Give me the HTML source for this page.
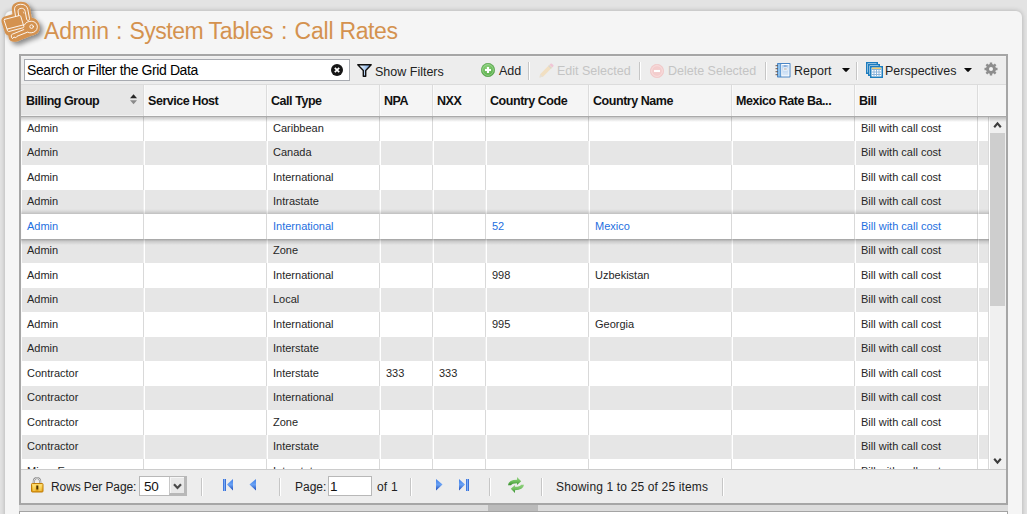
<!DOCTYPE html>
<html><head><meta charset="utf-8">
<style>
*{margin:0;padding:0;box-sizing:border-box}
html,body{width:1027px;height:514px;overflow:hidden;background:#e3e3e3;font-family:"Liberation Sans",sans-serif}
#panel{position:absolute;left:5px;top:11px;width:1017px;height:600px;background:#f5f5f5;border-radius:6px;box-shadow:0 0 5px rgba(0,0,0,0.24)}
#title{position:absolute;left:0;top:17px;width:420px;height:28px;font-size:23px;color:#d4924f;white-space:nowrap;line-height:28px}
#logo{position:absolute;left:0;top:0;width:60px;height:60px}
#grid{position:absolute;left:19px;top:54px;width:989px;height:451px;border:2px solid #a6a6a6;background:#fff;overflow:hidden}
#tb{position:absolute;left:0;top:0;width:985px;height:28px;background:#ededed;border-top:1px solid #f2f2f2}
#search{position:absolute;left:3px;top:2px;width:326px;height:22px;background:#fff;border:1px solid #a8abb1;font-size:14px;letter-spacing:-0.4px;line-height:20px;padding-left:2px;color:#000}
.tbt{position:absolute;top:7px;font-size:12.5px;line-height:16px;color:#222;white-space:nowrap}
.dis{color:#c4c4c4}
.sep{position:absolute;top:5px;width:2px;height:18px;border-left:1px solid #c6c6c6;background:#fff}
#hd{position:absolute;left:0;top:28px;width:985px;height:33px;background:#f5f5f5;border-top:1px solid #dcdcdc;border-bottom:1px solid #aaaaaa;z-index:5}
#hsh{position:absolute;left:0;top:61px;width:985px;height:5px;background:linear-gradient(rgba(0,0,0,0.22),rgba(0,0,0,0));z-index:6}
.h{position:absolute;top:0;height:31px;border-left:1px solid #dcdcdc;box-shadow:inset 1px 0 #fafafa,inset 0 -1px #fafafa;font-weight:bold;font-size:12.5px;letter-spacing:-0.45px;color:#111;line-height:33px;padding-left:4px;white-space:nowrap}
.h.sorted{background:#e6e6e6;border-left:none;box-shadow:inset 0 -1px #f2f2f2;padding-left:5px}
#body{position:absolute;left:0;top:61px;width:985px;height:352px;overflow:hidden;background:#fff}
.row{position:absolute;left:0;width:968px;background:#fff;box-shadow:inset 1px 0 #fcfcfc}
.row.alt{background:#e6e6e6}
.row.sel{background:#fff;z-index:2}
.row.sel:before{content:"";position:absolute;left:0;right:0;top:-5px;height:5px;background:linear-gradient(rgba(0,0,0,0),rgba(0,0,0,0.05) 40%,rgba(0,0,0,0.17))}
.row.sel:after{content:"";position:absolute;left:0;right:0;bottom:-6px;height:6px;background:linear-gradient(rgba(0,0,0,0.3),rgba(0,0,0,0.12) 40%,rgba(0,0,0,0))}
.row.sel .c{color:#1e6fe0}
.c{position:absolute;top:0;height:100%;font-size:11px;line-height:22px;padding-left:6px;color:#262626;white-space:nowrap;overflow:hidden;border-left:1px solid #d9d9d9;box-shadow:inset 1px 0 #fff}
.alt .c{border-left-color:#eeeeee}
.c.c0{border-left:none;box-shadow:none;padding-left:6px}
.c.fill{border-right:1px solid #d9d9d9}
.alt .c.fill{border-left-color:#d9d9d9}
.vl{position:absolute;top:0;width:1px;height:352px;background:#dadada;z-index:3}
#vs{position:absolute;left:969px;top:0;width:16px;height:352px;background:#f0f0f0;z-index:4}
#thumb{position:absolute;left:0;top:16px;width:15px;height:173px;background:#cecece}
#ft{position:absolute;left:0;top:413px;width:985px;height:34px;background:#ededed;border-top:1px solid #cccccc}
.ftt{position:absolute;top:10px;font-size:12px;line-height:14px;color:#222;white-space:nowrap}
.fsep{position:absolute;top:8px;width:2px;height:18px;border-left:1px solid #c6c6c6;background:#fff}
#hs{position:absolute;left:19px;top:505px;width:989px;height:6px;background:#dcdcdc}
#hthumb{position:absolute;left:469px;top:0;width:50px;height:6px;background:#bbbbbb}
#below{position:absolute;left:19px;top:511px;width:989px;height:10px;background:#fff;border:1px solid #a4a4a4}
</style></head><body>
<div id="panel"></div>
<svg id="logo" viewBox="0 0 60 60">
 <defs><filter id="sh" x="-30%" y="-30%" width="160%" height="160%"><feGaussianBlur in="SourceAlpha" stdDeviation="2.8"/><feOffset dx="2.5" dy="3"/><feComponentTransfer><feFuncA type="linear" slope="0.45"/></feComponentTransfer><feMerge><feMergeNode/><feMergeNode in="SourceGraphic"/></feMerge></filter></defs>
 <g filter="url(#sh)">
  <path d="M11.8 9 C11.8 5 14.5 2.2 20.3 1.8 C25.8 1.5 29.3 4.3 30.3 8.8 L31.6 17.8 C35.5 18 39.5 21.5 39.8 26.8 C40 31.5 37 35 32 35.6 L20 40.2 C17.5 41.5 15.5 42 13.8 41.8 C11.2 41.6 9.4 40.6 8.8 38.6 L8.3 35.5 C6.8 35.3 5.6 34.3 5 32.8 L1.7 22.5 C1 20 1.8 17.6 4 16.8 L12.4 14.3 Z" fill="#d4924f"/>
 </g>
 <g fill="none" stroke="#fff" stroke-width="0.9" stroke-linejoin="round" stroke-linecap="round">
  <path d="M4.8 19.3 L19.2 15.6 C20 15.4 20.6 15.8 20.8 16.5 L23.8 26.3 C24 27 23.6 27.6 22.9 27.8 L9 31.5 C8.3 31.7 7.7 31.3 7.5 30.6 L4.2 20.6 C4 19.9 4.2 19.5 4.8 19.3 Z"/>
  <path d="M7.4 29 L23 25"/>
  <path d="M15.5 16.2 L14.6 10 C14.2 6.5 16.5 4.5 20.5 4.3 C24.5 4.1 27 6 27.8 9.5 L29.5 18.5 C29.7 19.6 29.1 20.3 28.2 20.4 C27.4 20.5 26.8 20 26.6 19.1 L25.2 11.5 C24.8 9.2 23.3 8.2 21.2 8.3 C19 8.4 17.8 9.8 18.1 12 L18.7 15.4"/>
  <path d="M24.4 25 C25.5 22.5 28 21.2 31.5 21.3 C35.2 21.5 37.5 24 37.3 27.3 C37.1 30.6 34.5 32.6 31.2 32.8 C29.8 32.9 28.6 32.6 27.6 32.1 L17 36.3 L15.8 37.8 L14 37 L13 38.3 C12.2 38.6 11.6 38.2 11.5 37.4 L11.3 35.8 C11.2 35 11.6 34.5 12.4 34.2 L23.8 29.6"/>
  <circle cx="31.6" cy="26.6" r="1.8"/>
  <path d="M23.4 12 L23.9 13.2" stroke-width="0.6"/>
 </g>
</svg>
<div id="title"><span style="position:absolute;left:44px;letter-spacing:-0.05px">Admin</span><span style="position:absolute;left:116px;letter-spacing:0px">:</span><span style="position:absolute;left:129.5px;letter-spacing:-0.5px">System</span><span style="position:absolute;left:208.5px;letter-spacing:-0.3px">Tables</span><span style="position:absolute;left:281px;letter-spacing:0px">:</span><span style="position:absolute;left:294.5px;letter-spacing:-0.2px">Call</span><span style="position:absolute;left:339.5px;letter-spacing:-0.4px">Rates</span></div>
<div id="grid">
 <div id="tb">
  <div id="search">Search or Filter the Grid Data
   <svg style="position:absolute;left:306px;top:4px" width="12" height="12" viewBox="0 0 12 12"><circle cx="6" cy="6" r="6" fill="#161616"/><path d="M3.8 3.8 L8.2 8.2 M8.2 3.8 L3.8 8.2" stroke="#fff" stroke-width="1.7"/></svg>
  </div>
  <svg style="position:absolute;left:336px;top:7px" width="15" height="13" viewBox="0 0 15 13"><defs><linearGradient id="fn" x1="0" y1="0" x2="1" y2="0"><stop offset="0" stop-color="#ffffff"/><stop offset="0.6" stop-color="#a8c8ee"/><stop offset="1" stop-color="#5a8ad0"/></linearGradient></defs><path d="M0.8 0.8 H14.2 L8.7 6.6 V12.2 H6.3 V6.6 Z" fill="url(#fn)" stroke="#111" stroke-width="1.4" stroke-linejoin="round"/></svg>
  <div class="tbt" style="left:354px">Show Filters</div>
  <svg style="position:absolute;left:460px;top:6px" width="14" height="14" viewBox="0 0 14 14"><defs><radialGradient id="gg" cx="45%" cy="35%" r="70%"><stop offset="0" stop-color="#8fd47e"/><stop offset="1" stop-color="#4aa33c"/></radialGradient></defs><circle cx="7" cy="7" r="6.7" fill="url(#gg)" stroke="#4f9c45" stroke-width="0.6"/><circle cx="7" cy="7" r="5.4" fill="none" stroke="#c8ecc0" stroke-opacity="0.7" stroke-width="0.7"/><path d="M7 4 V10 M4 7 H10" stroke="#fff" stroke-width="2.1"/></svg>
  <div class="tbt" style="left:478px;top:6px">Add</div>
  <div class="sep" style="left:507px"></div>
  <svg style="position:absolute;left:517px;top:6px" width="16" height="16" viewBox="0 0 16 16"><path d="M1.5 14.5 L2.3 11 L11.5 1.8 L14.2 4.5 L5 13.7 Z" fill="#f1dfc2"/><path d="M11.5 1.8 L12.6 0.7 C13 0.3 13.5 0.3 13.9 0.7 L15.3 2.1 C15.7 2.5 15.7 3 15.3 3.4 L14.2 4.5 Z" fill="#f0c6d6"/><path d="M10.6 2.7 L13.3 5.4" stroke="#d6d6d6" stroke-width="1.2"/><path d="M1.5 14.5 L2.3 11 L5 13.7 Z" fill="#e6e0d6"/></svg>
  <div class="tbt dis" style="left:536px;top:6px">Edit Selected</div>
  <div class="sep" style="left:618px"></div>
  <svg style="position:absolute;left:629px;top:7px" width="14" height="14" viewBox="0 0 14 14"><circle cx="7" cy="7" r="6.7" fill="#f3cdcd" stroke="#efc3c3" stroke-width="0.6"/><circle cx="7" cy="7" r="5.4" fill="none" stroke="#f9e2e2" stroke-width="0.7"/><path d="M4 7 H10" stroke="#fff" stroke-width="2.1"/></svg>
  <div class="tbt dis" style="left:647px;top:6px">Delete Selected</div>
  <div class="sep" style="left:744px"></div>
  <svg style="position:absolute;left:754px;top:5px" width="16" height="16" viewBox="0 0 16 16"><defs><linearGradient id="rp" x1="0" y1="0" x2="0" y2="1"><stop offset="0" stop-color="#a9c8ec"/><stop offset="1" stop-color="#dbe9f8"/></linearGradient></defs><rect x="2" y="1" width="13.5" height="14.5" rx="0.8" fill="#4a86c6"/><rect x="3" y="2" width="2.4" height="12.5" fill="#8cc0ec"/><rect x="6.2" y="2" width="8.3" height="12.5" fill="#fff"/><rect x="7.2" y="3" width="6.3" height="10.5" fill="url(#rp)"/><rect x="8.2" y="5.5" width="4.3" height="3" fill="#fff"/><path d="M8.8 7 H11.8" stroke="#777" stroke-width="0.7"/><path d="M9 4 H11.5" stroke="#3a6fb0" stroke-width="0.6"/><path d="M0.5 3.7 H3 M0.5 6.7 H3 M0.5 9.7 H3 M0.5 12.7 H3" stroke="#6a5a50" stroke-width="1"/></svg>
  <div class="tbt" style="left:773px;top:6px">Report</div>
  <svg style="position:absolute;left:821px;top:11px" width="8" height="4" viewBox="0 0 8 4"><path d="M0 0 H8 L4.6 3.8 H3.4 Z" fill="#0a0a0a"/></svg>
  <div class="sep" style="left:835px"></div>
  <svg style="position:absolute;left:845px;top:5px" width="17" height="16" viewBox="0 0 17 16"><rect x="0.75" y="0.75" width="10.5" height="10.5" fill="#fff" stroke="#1c7cbe" stroke-width="1.5"/><rect x="2.75" y="2.75" width="10.5" height="10.5" fill="#fff" stroke="#1c7cbe" stroke-width="1.5"/><rect x="4.75" y="4.75" width="11.5" height="10.5" fill="#fff" stroke="#1c7cbe" stroke-width="1.5"/><path d="M6 7.5 H15 M6 10 H15 M6 12.5 H15 M8 7 V14 M10.5 7 V14 M13 7 V14" stroke="#8ab4dc" stroke-width="1"/><path d="M6 6.2 H15" stroke="#f0b830" stroke-width="1"/></svg>
  <div class="tbt" style="left:864px;top:6px">Perspectives</div>
  <svg style="position:absolute;left:943px;top:11px" width="8" height="4" viewBox="0 0 8 4"><path d="M0 0 H8 L4.6 3.8 H3.4 Z" fill="#0a0a0a"/></svg>
  <svg style="position:absolute;left:963px;top:5px" width="14" height="14" viewBox="0 0 14 14"><g fill="#8e8e8e"><circle cx="7" cy="7" r="5"/><rect x="5.8" y="0.5" width="2.4" height="13"/><rect x="0.5" y="5.8" width="13" height="2.4"/><rect x="5.8" y="0.5" width="2.4" height="13" transform="rotate(45 7 7)"/><rect x="5.8" y="0.5" width="2.4" height="13" transform="rotate(-45 7 7)"/></g><circle cx="7" cy="7" r="2" fill="#f4f4f4"/></svg>
 </div>
 <div id="hd">
<div class="h sorted" style="left:0px;width:122px"><span>Billing Group</span></div>
<div class="h" style="left:122px;width:123px"><span>Service Host</span></div>
<div class="h" style="left:245px;width:113px"><span>Call Type</span></div>
<div class="h" style="left:358px;width:53px"><span>NPA</span></div>
<div class="h" style="left:411px;width:53px"><span>NXX</span></div>
<div class="h" style="left:464px;width:103px"><span>Country Code</span></div>
<div class="h" style="left:567px;width:143px"><span>Country Name</span></div>
<div class="h" style="left:710px;width:123px"><span>Mexico Rate Ba...</span></div>
<div class="h" style="left:833px;width:123px"><span>Bill</span></div>
<div class="h" style="left:956px;width:29px"></div>
  <svg style="position:absolute;left:109px;top:9px" width="7" height="11" viewBox="0 0 7 11"><path d="M0 4.2 L3.5 0.2 L7 4.2 Z" fill="#262626"/><path d="M0 6.3 L3.5 10.3 L7 6.3 Z" fill="#8a8a8a"/></svg>
 </div>
 <div id="hsh"></div>
 <div id="body">
<div class="row" style="top:0px;height:24px"><div class="c c0" style="left:0px;width:122px;padding-top:0px">Admin</div><div class="c" style="left:122px;width:123px;padding-top:0px"></div><div class="c" style="left:245px;width:113px;padding-top:0px">Caribbean</div><div class="c" style="left:358px;width:53px;padding-top:0px"></div><div class="c" style="left:411px;width:53px;padding-top:0px"></div><div class="c" style="left:464px;width:103px;padding-top:0px"></div><div class="c" style="left:567px;width:143px;padding-top:0px"></div><div class="c" style="left:710px;width:123px;padding-top:0px"></div><div class="c" style="left:833px;width:123px;padding-top:0px">Bill with call cost</div><div class="c fill" style="left:956px;width:12px"></div></div>
<div class="row alt" style="top:24px;height:24px"><div class="c c0" style="left:0px;width:122px;padding-top:0px">Admin</div><div class="c" style="left:122px;width:123px;padding-top:0px"></div><div class="c" style="left:245px;width:113px;padding-top:0px">Canada</div><div class="c" style="left:358px;width:53px;padding-top:0px"></div><div class="c" style="left:411px;width:53px;padding-top:0px"></div><div class="c" style="left:464px;width:103px;padding-top:0px"></div><div class="c" style="left:567px;width:143px;padding-top:0px"></div><div class="c" style="left:710px;width:123px;padding-top:0px"></div><div class="c" style="left:833px;width:123px;padding-top:0px">Bill with call cost</div><div class="c fill" style="left:956px;width:12px"></div></div>
<div class="row" style="top:48px;height:25px"><div class="c c0" style="left:0px;width:122px;padding-top:1px">Admin</div><div class="c" style="left:122px;width:123px;padding-top:1px"></div><div class="c" style="left:245px;width:113px;padding-top:1px">International</div><div class="c" style="left:358px;width:53px;padding-top:1px"></div><div class="c" style="left:411px;width:53px;padding-top:1px"></div><div class="c" style="left:464px;width:103px;padding-top:1px"></div><div class="c" style="left:567px;width:143px;padding-top:1px"></div><div class="c" style="left:710px;width:123px;padding-top:1px"></div><div class="c" style="left:833px;width:123px;padding-top:1px">Bill with call cost</div><div class="c fill" style="left:956px;width:12px"></div></div>
<div class="row alt" style="top:73px;height:24px"><div class="c c0" style="left:0px;width:122px;padding-top:0px">Admin</div><div class="c" style="left:122px;width:123px;padding-top:0px"></div><div class="c" style="left:245px;width:113px;padding-top:0px">Intrastate</div><div class="c" style="left:358px;width:53px;padding-top:0px"></div><div class="c" style="left:411px;width:53px;padding-top:0px"></div><div class="c" style="left:464px;width:103px;padding-top:0px"></div><div class="c" style="left:567px;width:143px;padding-top:0px"></div><div class="c" style="left:710px;width:123px;padding-top:0px"></div><div class="c" style="left:833px;width:123px;padding-top:0px">Bill with call cost</div><div class="c fill" style="left:956px;width:12px"></div></div>
<div class="row sel" style="top:97px;height:25px"><div class="c c0" style="left:0px;width:122px;padding-top:1px">Admin</div><div class="c" style="left:122px;width:123px;padding-top:1px"></div><div class="c" style="left:245px;width:113px;padding-top:1px">International</div><div class="c" style="left:358px;width:53px;padding-top:1px"></div><div class="c" style="left:411px;width:53px;padding-top:1px"></div><div class="c" style="left:464px;width:103px;padding-top:1px">52</div><div class="c" style="left:567px;width:143px;padding-top:1px">Mexico</div><div class="c" style="left:710px;width:123px;padding-top:1px"></div><div class="c" style="left:833px;width:123px;padding-top:1px">Bill with call cost</div><div class="c fill" style="left:956px;width:12px"></div></div>
<div class="row alt" style="top:122px;height:24px"><div class="c c0" style="left:0px;width:122px;padding-top:0px">Admin</div><div class="c" style="left:122px;width:123px;padding-top:0px"></div><div class="c" style="left:245px;width:113px;padding-top:0px">Zone</div><div class="c" style="left:358px;width:53px;padding-top:0px"></div><div class="c" style="left:411px;width:53px;padding-top:0px"></div><div class="c" style="left:464px;width:103px;padding-top:0px"></div><div class="c" style="left:567px;width:143px;padding-top:0px"></div><div class="c" style="left:710px;width:123px;padding-top:0px"></div><div class="c" style="left:833px;width:123px;padding-top:0px">Bill with call cost</div><div class="c fill" style="left:956px;width:12px"></div></div>
<div class="row" style="top:146px;height:25px"><div class="c c0" style="left:0px;width:122px;padding-top:1px">Admin</div><div class="c" style="left:122px;width:123px;padding-top:1px"></div><div class="c" style="left:245px;width:113px;padding-top:1px">International</div><div class="c" style="left:358px;width:53px;padding-top:1px"></div><div class="c" style="left:411px;width:53px;padding-top:1px"></div><div class="c" style="left:464px;width:103px;padding-top:1px">998</div><div class="c" style="left:567px;width:143px;padding-top:1px">Uzbekistan</div><div class="c" style="left:710px;width:123px;padding-top:1px"></div><div class="c" style="left:833px;width:123px;padding-top:1px">Bill with call cost</div><div class="c fill" style="left:956px;width:12px"></div></div>
<div class="row alt" style="top:171px;height:24px"><div class="c c0" style="left:0px;width:122px;padding-top:0px">Admin</div><div class="c" style="left:122px;width:123px;padding-top:0px"></div><div class="c" style="left:245px;width:113px;padding-top:0px">Local</div><div class="c" style="left:358px;width:53px;padding-top:0px"></div><div class="c" style="left:411px;width:53px;padding-top:0px"></div><div class="c" style="left:464px;width:103px;padding-top:0px"></div><div class="c" style="left:567px;width:143px;padding-top:0px"></div><div class="c" style="left:710px;width:123px;padding-top:0px"></div><div class="c" style="left:833px;width:123px;padding-top:0px">Bill with call cost</div><div class="c fill" style="left:956px;width:12px"></div></div>
<div class="row" style="top:195px;height:25px"><div class="c c0" style="left:0px;width:122px;padding-top:1px">Admin</div><div class="c" style="left:122px;width:123px;padding-top:1px"></div><div class="c" style="left:245px;width:113px;padding-top:1px">International</div><div class="c" style="left:358px;width:53px;padding-top:1px"></div><div class="c" style="left:411px;width:53px;padding-top:1px"></div><div class="c" style="left:464px;width:103px;padding-top:1px">995</div><div class="c" style="left:567px;width:143px;padding-top:1px">Georgia</div><div class="c" style="left:710px;width:123px;padding-top:1px"></div><div class="c" style="left:833px;width:123px;padding-top:1px">Bill with call cost</div><div class="c fill" style="left:956px;width:12px"></div></div>
<div class="row alt" style="top:220px;height:24px"><div class="c c0" style="left:0px;width:122px;padding-top:0px">Admin</div><div class="c" style="left:122px;width:123px;padding-top:0px"></div><div class="c" style="left:245px;width:113px;padding-top:0px">Interstate</div><div class="c" style="left:358px;width:53px;padding-top:0px"></div><div class="c" style="left:411px;width:53px;padding-top:0px"></div><div class="c" style="left:464px;width:103px;padding-top:0px"></div><div class="c" style="left:567px;width:143px;padding-top:0px"></div><div class="c" style="left:710px;width:123px;padding-top:0px"></div><div class="c" style="left:833px;width:123px;padding-top:0px">Bill with call cost</div><div class="c fill" style="left:956px;width:12px"></div></div>
<div class="row" style="top:244px;height:25px"><div class="c c0" style="left:0px;width:122px;padding-top:1px">Contractor</div><div class="c" style="left:122px;width:123px;padding-top:1px"></div><div class="c" style="left:245px;width:113px;padding-top:1px">Interstate</div><div class="c" style="left:358px;width:53px;padding-top:1px">333</div><div class="c" style="left:411px;width:53px;padding-top:1px">333</div><div class="c" style="left:464px;width:103px;padding-top:1px"></div><div class="c" style="left:567px;width:143px;padding-top:1px"></div><div class="c" style="left:710px;width:123px;padding-top:1px"></div><div class="c" style="left:833px;width:123px;padding-top:1px">Bill with call cost</div><div class="c fill" style="left:956px;width:12px"></div></div>
<div class="row alt" style="top:269px;height:24px"><div class="c c0" style="left:0px;width:122px;padding-top:0px">Contractor</div><div class="c" style="left:122px;width:123px;padding-top:0px"></div><div class="c" style="left:245px;width:113px;padding-top:0px">International</div><div class="c" style="left:358px;width:53px;padding-top:0px"></div><div class="c" style="left:411px;width:53px;padding-top:0px"></div><div class="c" style="left:464px;width:103px;padding-top:0px"></div><div class="c" style="left:567px;width:143px;padding-top:0px"></div><div class="c" style="left:710px;width:123px;padding-top:0px"></div><div class="c" style="left:833px;width:123px;padding-top:0px">Bill with call cost</div><div class="c fill" style="left:956px;width:12px"></div></div>
<div class="row" style="top:293px;height:25px"><div class="c c0" style="left:0px;width:122px;padding-top:1px">Contractor</div><div class="c" style="left:122px;width:123px;padding-top:1px"></div><div class="c" style="left:245px;width:113px;padding-top:1px">Zone</div><div class="c" style="left:358px;width:53px;padding-top:1px"></div><div class="c" style="left:411px;width:53px;padding-top:1px"></div><div class="c" style="left:464px;width:103px;padding-top:1px"></div><div class="c" style="left:567px;width:143px;padding-top:1px"></div><div class="c" style="left:710px;width:123px;padding-top:1px"></div><div class="c" style="left:833px;width:123px;padding-top:1px">Bill with call cost</div><div class="c fill" style="left:956px;width:12px"></div></div>
<div class="row alt" style="top:318px;height:24px"><div class="c c0" style="left:0px;width:122px;padding-top:0px">Contractor</div><div class="c" style="left:122px;width:123px;padding-top:0px"></div><div class="c" style="left:245px;width:113px;padding-top:0px">Interstate</div><div class="c" style="left:358px;width:53px;padding-top:0px"></div><div class="c" style="left:411px;width:53px;padding-top:0px"></div><div class="c" style="left:464px;width:103px;padding-top:0px"></div><div class="c" style="left:567px;width:143px;padding-top:0px"></div><div class="c" style="left:710px;width:123px;padding-top:0px"></div><div class="c" style="left:833px;width:123px;padding-top:0px">Bill with call cost</div><div class="c fill" style="left:956px;width:12px"></div></div>
<div class="row" style="top:342px;height:25px"><div class="c c0" style="left:0px;width:122px;padding-top:1px">Minor Emergency</div><div class="c" style="left:122px;width:123px;padding-top:1px"></div><div class="c" style="left:245px;width:113px;padding-top:1px">Interstate</div><div class="c" style="left:358px;width:53px;padding-top:1px"></div><div class="c" style="left:411px;width:53px;padding-top:1px"></div><div class="c" style="left:464px;width:103px;padding-top:1px"></div><div class="c" style="left:567px;width:143px;padding-top:1px"></div><div class="c" style="left:710px;width:123px;padding-top:1px"></div><div class="c" style="left:833px;width:123px;padding-top:1px">Bill with call cost</div><div class="c fill" style="left:956px;width:12px"></div></div>

  <div id="vs"><svg style="position:absolute;left:3px;top:4px" width="9" height="8" viewBox="0 0 9 8"><path d="M1.2 6.2 L4.5 2.3 L7.8 6.2" fill="none" stroke="#3c3c3c" stroke-width="2.1"/></svg><div id="thumb"></div><svg style="position:absolute;left:3px;top:340px" width="9" height="8" viewBox="0 0 9 8"><path d="M1.2 1.8 L4.5 5.7 L7.8 1.8" fill="none" stroke="#3c3c3c" stroke-width="2.1"/></svg></div>
 </div>
 <div id="ft">
  <svg style="position:absolute;left:9px;top:6px" width="14" height="17" viewBox="0 0 14 17"><defs><linearGradient id="lk" x1="0" y1="0" x2="0" y2="1"><stop offset="0" stop-color="#ffe27a"/><stop offset="0.5" stop-color="#f5c232"/><stop offset="1" stop-color="#e09a10"/></linearGradient></defs><path d="M3.8 8 V6 C3.8 3.3 5.2 2 7 2 C8.8 2 10.2 3.3 10.2 6 V8" fill="none" stroke="#8a8a8a" stroke-width="2.2"/><path d="M3.8 8 V6 C3.8 3.3 5.2 2 7 2 C8.8 2 10.2 3.3 10.2 6 V8" fill="none" stroke="#f4f4f4" stroke-width="0.8"/><rect x="1.5" y="7.5" width="11.5" height="8.5" rx="0.8" fill="url(#lk)" stroke="#c07c08" stroke-width="1"/><path d="M3 10 H5.5 M3 12 H5.5 M3 14 H5.5 M8.5 10 H11.5 M8.5 12 H11.5 M8.5 14 H11.5" stroke="#fff2b0" stroke-width="0.7"/><rect x="6.3" y="9.5" width="2" height="4" fill="#4a3000"/></svg>
  <div class="ftt" style="left:30px;letter-spacing:-0.1px">Rows Per Page:</div>
  <div style="position:absolute;left:118px;top:6px;width:48px;height:20px;background:#fff;border:1px solid #b8b8b8;font-size:13.5px;line-height:20px;padding-left:4px;color:#111;letter-spacing:-0.3px">50<div style="position:absolute;right:0;top:0;width:17px;height:18px;background:#e8e8e8;border-left:1px solid #c8c8c8;border-right:2px solid #b8b8b8;border-bottom:2px solid #b8b8b8;box-shadow:inset 1px 1px #f6f6f6"><svg style="position:absolute;left:3px;top:6px" width="9" height="7" viewBox="0 0 9 7"><path d="M1 1.2 L4.5 5 L8 1.2" fill="none" stroke="#4a4a4a" stroke-width="2.2"/></svg></div></div>
  <div class="fsep" style="left:180px"></div>
  <svg style="position:absolute;left:201px;top:9px" width="11" height="12" viewBox="0 0 11 12"><defs><linearGradient id="bl" x1="0" y1="0" x2="0" y2="1"><stop offset="0" stop-color="#3f7ee8"/><stop offset="0.5" stop-color="#6aa2f4"/><stop offset="1" stop-color="#1a48b8"/></linearGradient><linearGradient id="blh" x1="0" y1="0" x2="1" y2="0"><stop offset="0" stop-color="#2a5fd0"/><stop offset="0.5" stop-color="#79adf6"/><stop offset="1" stop-color="#1f52c4"/></linearGradient></defs><rect x="1" y="0" width="3" height="12" fill="url(#blh)"/><path d="M11 0 L5 5.6 L11 11.5 Z" fill="url(#bl)"/></svg>
  <svg style="position:absolute;left:228px;top:9px" width="7" height="12" viewBox="0 0 7 12"><path d="M7 0 L0.5 5.6 L7 11.5 Z" fill="url(#bl)"/></svg>
  <div class="fsep" style="left:258px"></div>
  <div class="ftt" style="left:274px">Page:</div>
  <div style="position:absolute;left:307px;top:6px;width:44px;height:20px;background:#fff;border:1px solid #b8b8b8;font-size:13.5px;line-height:20px;padding-left:1px;color:#111">1</div>
  <div class="ftt" style="left:356px;letter-spacing:0.2px">of 1</div>
  <div class="fsep" style="left:389px"></div>
  <svg style="position:absolute;left:415px;top:9px" width="7" height="12" viewBox="0 0 7 12"><path d="M0 0 L6.5 5.6 L0 11.5 Z" fill="url(#bl)"/></svg>
  <svg style="position:absolute;left:438px;top:9px" width="11" height="12" viewBox="0 0 11 12"><path d="M0 0 L6 5.6 L0 11.5 Z" fill="url(#bl)"/><rect x="7" y="0" width="3" height="12" fill="url(#blh)"/></svg>
  <div class="fsep" style="left:468px"></div>
  <svg style="position:absolute;left:486px;top:6px" width="18" height="18" viewBox="0 0 18 18"><defs><linearGradient id="gr" x1="0" y1="0" x2="0" y2="1"><stop offset="0" stop-color="#9ad486"/><stop offset="0.55" stop-color="#6bbd5a"/><stop offset="1" stop-color="#3a9030"/></linearGradient><linearGradient id="gr2" x1="0" y1="0" x2="0" y2="1"><stop offset="0" stop-color="#8fd07c"/><stop offset="0.5" stop-color="#72c060"/><stop offset="1" stop-color="#2f8a2a"/></linearGradient></defs><path d="M1 9.2 Q1.8 3.8 10 3.8 L10 1 L14.2 5.2 L10 9 L10 7.2 Q5 7.2 4 9.2 Z" fill="url(#gr)"/><path d="M17 8.8 Q16.2 14.2 8 14.2 L8 17 L3.8 12.8 L8 9 L8 10.8 Q13 10.8 14 8.8 Z" fill="url(#gr2)"/></svg>
  <div class="fsep" style="left:520px"></div>
  <div class="ftt" style="left:535px;letter-spacing:0.15px">Showing 1 to 25 of 25 items</div>
  <div class="fsep" style="left:701px"></div>
 </div>
</div>
<div id="hs"><div id="hthumb"></div></div>
<div id="below"></div>
</body></html>
